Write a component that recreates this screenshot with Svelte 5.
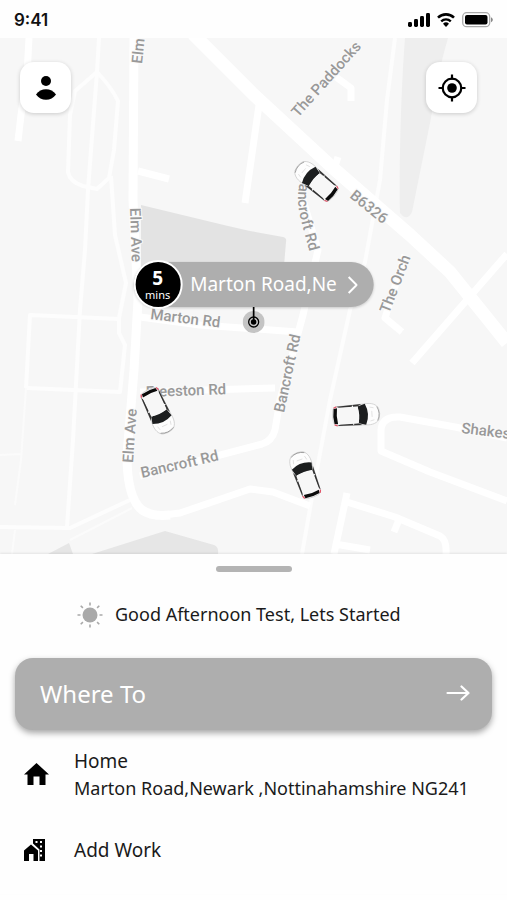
<script lang="ts">
  type Car = { x: number; y: number; heading: number };

  type RoadLabel = { name: string; x: number; y: number; angle: number };

  const cars: Car[] = [
    { x: 316, y: 181, heading: -50 },
    { x: 158, y: 411, heading: 155 },
    { x: 356, y: 415, heading: 86 },
    { x: 305, y: 475, heading: -20 },
  ];

  const labels: RoadLabel[] = [
    { name: 'Elm', x: 142, y: 64, angle: -84 },
    { name: 'Elm Ave', x: 130, y: 208, angle: 88 },
    { name: 'Elm Ave', x: 133, y: 463, angle: -86 },
    { name: 'The Paddocks', x: 298, y: 118, angle: -48 },
    { name: 'B6326', x: 349, y: 197, angle: 39 },
    { name: 'The Orch', x: 389, y: 314, angle: -69 },
    { name: 'Marton Rd', x: 150, y: 319, angle: 7 },
    { name: 'Freeston Rd', x: 146, y: 397, angle: -2 },
    { name: 'Bancroft Rd', x: 142, y: 478, angle: -13 },
    { name: 'Bancroft Rd', x: 284, y: 413, angle: -78 },
    { name: 'Shakes', x: 461, y: 433, angle: 7 },
  ];

  let userName = $state('Test');
  let pickup = $state('Marton Road,Ne');
  let minutes = $state(5);
  let homeAddress = $state('Marton Road,Newark ,Nottinahamshire NG241');
</script>

<main class="screen">
  <header class="status-bar">
    <span class="clock">9:41</span>
    <div class="status-icons">
      <svg width="22" height="14" viewBox="0 0 22 14" aria-hidden="true">
        <rect x="0" y="9" width="4" height="5" rx="1.4" />
        <rect x="6" y="6" width="4" height="8" rx="1.4" />
        <rect x="12" y="3" width="4" height="11" rx="1.4" />
        <rect x="18" y="0" width="4" height="14" rx="1.4" />
      </svg>
      <svg width="20" height="14" viewBox="0 0 20 14" aria-hidden="true">
        <path d="M2 4.6a11.6 11.6 0 0 1 16 0" fill="none" stroke="#000" stroke-width="2.6" />
        <path d="M5.2 8.3a7 7 0 0 1 9.6 0" fill="none" stroke="#000" stroke-width="2.4" />
        <path d="M10 14l-3-3.2a4.3 4.3 0 0 1 6 0z" />
      </svg>
      <svg width="31" height="16" viewBox="0 0 31 16" aria-hidden="true">
        <rect x="0.7" y="0.7" width="27" height="14" rx="4" fill="none" stroke="#aaa" stroke-width="1.3" />
        <rect x="3" y="3" width="22.5" height="9.5" rx="2" />
        <path d="M29 5.2v5c1-.4 1.8-1.4 1.8-2.5S30 5.6 29 5.2z" fill="#888" />
      </svg>
    </div>
  </header>

  <section class="map" aria-label="Map">
    <svg class="map-canvas" viewBox="0 38 507 516">
      <defs>
        <g id="car">
          <path
            d="M-10.5-9C-11.5-16-9-21.5-5-23Q0-24.5 5-23C9-21.5 11.5-16 10.5-9L9.5 19Q9 22.5 6 23Q0 24 -6 23Q-9 22.5-9.5 19z"
            fill="#fdfdfd"
            stroke="#c8c8c8"
            stroke-width="0.7"
          />
          <path d="M-7-21.3Q0-25 7-21.3" fill="none" stroke="#888" stroke-width="0.7" />
          <path d="M-3-16h6M-6-18l-1 4M6-18l1 4" stroke="#ddd" stroke-width="0.8" />
          <path d="M-10.500-9.5Q0-14.5 10.5-9.5L8.5-2Q0-4.5-8.5-2z" fill="#1c1e1f" />
          <path d="M-10.5-6L-8-1V16L-9.7 19zM10.5-6L8-1V16L9.7 19z" fill="#333" />
          <path d="M-9.600 3h1.600M8 3h1.600" stroke="#fff" stroke-width="1.2" />
          <rect x="-8.5" y="-2.5" width="17" height="21" rx="1.5" fill="#f7f7f7" />
          <path d="M-8 18.5Q0 20 8 18.5L7.5 22Q0 23.5-7.5 22z" fill="#0b0b0b" />
          <path d="M-9.5 19l1.2 3M9.5 19l-1.2 3" stroke="#e2576b" stroke-width="1.3" />
        </g>
        <path id="bancroft-curve" d="M302 174C297 190 297 205 301 220C305 237 309 248 313 266" />
      </defs>

      <rect x="0" y="38" width="507" height="516" fill="#f7f7f7" />

      <!-- fields -->
      <path class="field" d="M141 205L228 226L250 231L283 237Q287 238 286 242L282 290H141z" />
      <path class="field pale" d="M405 38H448C441 62 436 85 431 118L412 212Q407 222 400 213C399 165 401 90 405 38z" />
      <path class="field bottom" d="M48 554L69 543L73 554zM92 554L165 531L214 545Q219 547 218 554z" />

      <!-- paths -->
      <g class="roads thin">
        <path d="M395 38L387 100L380 180L365 262L350 310L330 400L315 480L302 554" />
        <path d="M97 72L75 91L70 115L68 172Q70 182 83 186L97 189L109 178L114 150L118 101Q112 88 97 72" />
        <path d="M99 38L97 72L91 150L88 190L85 250L80 310L73 440L67 527" />
        <path d="M111 176L115 235L126 283L119 318L119 333L125 345L120 392L27 388" />
        <path d="M119 319L30 315L26 388" />
        <path d="M0 527L70 528L132 499" />
      </g>
      <g class="roads hairline">
        <path d="M26 388L21 460L15 505M0 455L21 454M132 508L70 540M15 530L12 554" />
      </g>

      <!-- streets -->
      <g class="roads street">
        <path d="M29 38L27 75L21 115L18 141" />
        <path d="M138 171L169 179" />
        <path d="M259 105L245 203" />
        <path d="M336 77L351 88V101M333 172L338 157" />
        <path d="M140 317L200 325L298 332M140 392L275 388" />
        <path d="M303 200L318 250L303 315L280 400L275 430Q272 441 262 444L140 476" />
        <path d="M405 255L385 318L402 332" />
        <path d="M507 254L412 363" />
        <path d="M507 438L455 427L400 417Q382 416 381 430V451L430 472L507 501" />
        <path d="M155 516L180 513L250 489L273 492L310 506" />
        <path d="M347 493L334 554M347 502L395 517L440 536Q447 540 446 554M400 517L394 532M335 544L370 550" />
      </g>
      <g class="roads main">
        <path d="M134 38L133 200L138 300L134 370L127 455Q127 498 142 510Q152 517 170 515" />
      </g>
      <g class="roads trunk">
        <path d="M193 34L253 94L333 168L410 235L450 272L507 343" />
      </g>

      <g class="labels">
        {#each labels as label}
          <text transform={`translate(${label.x} ${label.y}) rotate(${label.angle})`}>{label.name}</text>
        {/each}
        <text><textPath href="#bancroft-curve">Bancroft Rd</textPath></text>
      </g>

      {#each cars as car}
        <use href="#car" transform={`translate(${car.x} ${car.y}) rotate(${car.heading})`} />
      {/each}
    </svg>

    <div class="map-controls">
      <button type="button" class="map-button" aria-label="Profile">
        <svg width="20" height="24" viewBox="0 0 20 24" aria-hidden="true">
          <circle cx="10" cy="5" r="5" />
          <path d="M0 18.5C2.5 15 6 13.2 10 13.2s7.5 1.8 10 5.300C17.500 22 14 23.800 10 23.800s-7.500-1.800-10-5.300z" />
        </svg>
      </button>
      <button type="button" class="map-button" aria-label="My location">
        <svg width="28" height="28" viewBox="0 0 28 28" aria-hidden="true">
          <circle cx="14" cy="14" r="4.8" />
          <circle cx="14" cy="14" r="9.3" fill="none" stroke="#000" stroke-width="2.2" />
          <path d="M14 .5v5M14 22.5v5M.5 14h5M22.5 14h5" stroke="#000" stroke-width="2.2" />
        </svg>
      </button>
    </div>

    <div class="pickup">
      <button type="button" class="pickup-pill">
        <span class="eta"><strong>{minutes}</strong><small>mins</small></span>
        <span class="pickup-name">{pickup}</span>
        <svg width="10" height="18" viewBox="0 0 10 18" aria-hidden="true">
          <path d="M1 1l8 8-8 8" fill="none" stroke="#fff" stroke-width="2" />
        </svg>
      </button>
      <svg class="pickup-marker" width="22" height="26" viewBox="0 0 22 26" aria-hidden="true">
        <circle cx="11" cy="15" r="11" fill="#c4c4c4" />
        <circle cx="11" cy="15" r="5" fill="none" stroke="#000" stroke-width="1.3" />
        <circle cx="11" cy="15" r="2.8" />
        <path d="M11 0v15" stroke="#000" stroke-width="1.7" />
      </svg>
    </div>
  </section>

  <section class="sheet">
    <div class="handle"></div>

    <p class="greeting">
      <svg width="26" height="26" viewBox="0 0 26 26" aria-hidden="true">
        <circle cx="13" cy="13" r="7.5" fill="#a9a9a9" />
        <path
          d="M13 .5v3M13 22.5v3M.5 13h3M22.5 13h3M3.7 3.7l2.2 2.2M20.1 20.1l2.2 2.2M3.7 22.3l2.2-2.2M20.1 5.9l2.2-2.2"
          stroke="#a9a9a9"
          stroke-width="1.6"
        />
      </svg>
      Good Afternoon {userName}, Lets Started
    </p>

    <button type="button" class="where-to">
      Where To
      <svg width="24" height="16" viewBox="0 0 24 16" aria-hidden="true">
        <path
          d="M1.5 8h21M15.5 1.5L22.5 8l-7 6.5"
          fill="none"
          stroke="#fff"
          stroke-width="2.2"
          stroke-linecap="round"
          stroke-linejoin="round"
        />
      </svg>
    </button>

    <div class="places">
      <button type="button" class="place">
        <svg width="26" height="26" viewBox="0 0 26 26" aria-hidden="true">
          <path d="M13.5 1L26 12.5H22.5V23H16.5V14.5H10.5V23H4.5V12.5H1z" />
        </svg>
        <span class="place-text"><span class="place-name">Home</span><span>{homeAddress}</span></span>
      </button>
      <button type="button" class="place">
        <svg width="26" height="26" viewBox="0 0 26 26" aria-hidden="true">
          <path d="M1 23V12.5L8 6.5l7 6V23H10.5V16H6V23z" />
          <path
            fill-rule="evenodd"
            d="M10 1H22V23H16.5V11.500L10 5.600zM12.500 3v2h2V3zM17 3v2h2V3zM17 7.500v2h2v-2zM17 12v2h2v-2zM17 16.500v2h2v-2z"
          />
        </svg>
        <span class="place-name">Add Work</span>
      </button>
    </div>
  </section>
</main>

<style>
  :global(body) {
    margin: 0;
    background: #fefefe;
  }

  button {
    margin: 0;
    padding: 0;
    border: 0;
    background: none;
    color: inherit;
    font: inherit;
    cursor: pointer;
  }

  svg {
    display: block;
    flex: none;
  }

  .screen {
    min-height: 100vh;
    background: #fefefe;
    color: #1a1a1a;
    font-family: 'Noto Sans', 'Open Sans', sans-serif;
    font-size: 18px;
    line-height: 27px;
  }

  .status-bar {
    display: flex;
    align-items: center;
    justify-content: space-between;
    height: 38px;
    padding: 2px 14px 0;
    box-sizing: border-box;
  }

  .clock {
    font-family: Inter, sans-serif;
    font-size: 17px;
    font-weight: 600;
    color: #111;
  }

  .status-icons {
    display: flex;
    align-items: center;
    gap: 6px;
  }

  .map {
    position: relative;
    overflow: hidden;
  }

  .map-canvas {
    width: 100%;
    height: auto;
  }

  .field {
    fill: #e3e3e3;
  }

  .field.pale {
    fill: #eee;
  }

  .field.bottom {
    fill: #e6e6e6;
  }

  .roads {
    fill: none;
    stroke: #fff;
    stroke-linejoin: round;
  }

  .roads.thin {
    stroke: #fdfdfd;
    stroke-width: 4;
  }

  .roads.hairline {
    stroke: #fbfbfb;
    stroke-width: 2;
  }

  .street {
    stroke-width: 7;
  }

  .main {
    stroke-width: 9;
  }

  .trunk {
    stroke-width: 13;
  }

  .labels {
    fill: #999;
    stroke: #fafafa;
    stroke-width: 2;
    paint-order: stroke;
    font-family: Roboto, sans-serif;
    font-size: 15px;
    font-weight: 500;
  }

  .map-controls {
    position: absolute;
    inset: 0 0 auto;
    display: flex;
    justify-content: space-between;
    padding: 24px 30px 0 20px;
  }

  .map-button {
    display: grid;
    place-items: center;
    width: 51px;
    height: 51px;
    border-radius: 14px;
    background: #fff;
    box-shadow: 0 1px 4px rgba(0, 0, 0, 0.18);
  }

  .pickup {
    position: absolute;
    top: 224px;
    left: 50%;
    display: grid;
    justify-items: center;
    transform: translateX(-50%);
  }

  .pickup-pill {
    display: flex;
    align-items: center;
    height: 45px;
    padding-right: 16px;
    border-radius: 23px;
    background: #aeaeae;
    color: #fff;
    box-shadow: 0 1px 3px rgba(0, 0, 0, 0.2);
  }

  .eta {
    display: grid;
    align-content: center;
    justify-items: center;
    width: 45px;
    height: 45px;
    border: 2px solid #fff;
    border-radius: 50%;
    background: #000;
  }

  .eta strong {
    font-size: 19px;
    line-height: 20px;
  }

  .eta small {
    font-size: 11px;
    line-height: 13px;
  }

  .pickup-name {
    margin: 0 11px 0 8px;
    font-size: 19px;
    white-space: nowrap;
  }

  .sheet {
    position: relative;
    display: grid;
    padding: 12px 15px 30px;
    background: #fefefe;
    box-shadow: 0 -1px 2px rgba(0, 0, 0, 0.08);
  }

  .handle {
    justify-self: center;
    width: 76px;
    height: 6px;
    border-radius: 3px;
    background: #b4b4b4;
  }

  .greeting {
    display: flex;
    align-items: center;
    gap: 12px;
    margin: 29px 0 30px;
    padding-left: 62px;
  }

  .where-to {
    display: flex;
    align-items: center;
    justify-content: space-between;
    height: 72px;
    padding: 0 22px 2px 25px;
    border-radius: 18px;
    background: #aeaeae;
    color: #fff;
    font-size: 24px;
    box-shadow: 0 3px 6px rgba(0, 0, 0, 0.35);
  }

  .places {
    display: grid;
    gap: 35px;
    padding: 18px 8px 0;
  }

  .place {
    display: flex;
    align-items: center;
    gap: 25px;
    text-align: left;
  }

  .place-text {
    display: grid;
  }

  .place-name {
    font-size: 19px;
  }
</style>
